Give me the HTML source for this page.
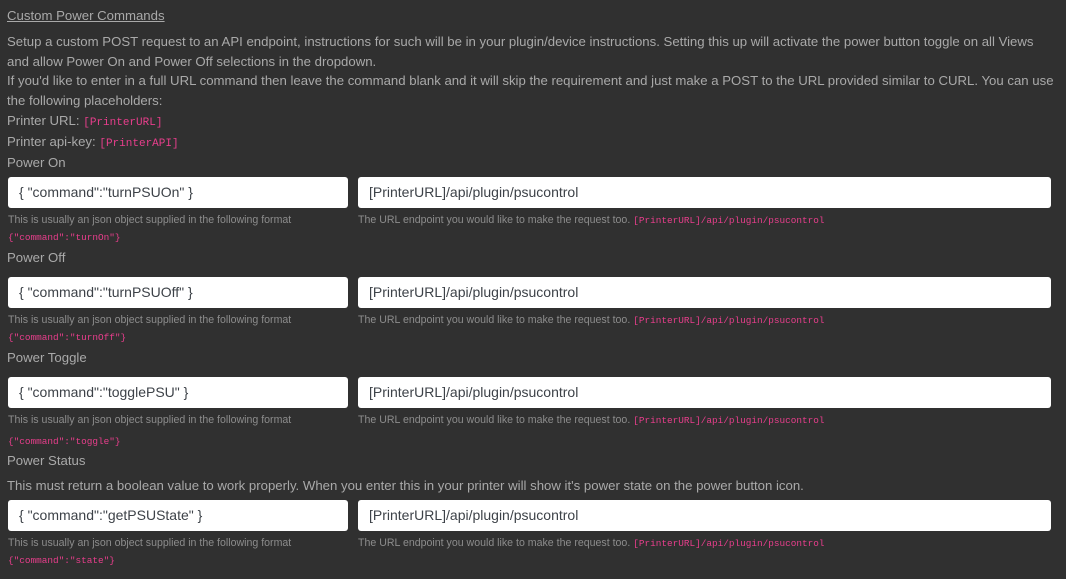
<!DOCTYPE html>
<html><head><style>
body{margin:0;width:1066px;height:579px;background:#303030;font-family:"Liberation Sans",sans-serif;color:#a9a9a9;position:relative;overflow:hidden}
.t{position:absolute;left:7px;white-space:nowrap;font-size:13.2px}
.s{position:absolute;white-space:nowrap;font-size:10.6px;color:#8c8c8c}
code,.c{font-family:"Liberation Mono",monospace;color:#e83e8c;font-size:9.4px}
.tc{font-size:11px}
.in{position:absolute;height:31px;background:#fff;border-radius:3px;color:#3d4248;font-size:14px;line-height:31px;box-sizing:border-box;padding-left:11px;white-space:nowrap}
.l{left:8px;width:340px}.r{left:358px;width:693px}
</style></head><body>
<div class="t" style="top:8px;text-decoration:underline">Custom Power Commands</div>
<div class="t" style="top:34px">Setup a custom POST request to an API endpoint, instructions for such will be in your plugin/device instructions. Setting this up will activate the power button toggle on all Views</div>
<div class="t" style="top:54px">and allow Power On and Power Off selections in the dropdown.</div>
<div class="t" style="top:73px">If you'd like to enter in a full URL command then leave the command blank and it will skip the requirement and just make a POST to the URL provided similar to CURL. You can use</div>
<div class="t" style="top:93px">the following placeholders:</div>
<div class="t" style="top:113px">Printer URL: <code class="tc">[PrinterURL]</code></div>
<div class="t" style="top:134px">Printer api-key: <code class="tc">[PrinterAPI]</code></div>

<div class="t" style="top:155px">Power On</div>
<div class="in l" style="top:177px">{ "command":"turnPSUOn" }</div>
<div class="in r" style="top:177px">[PrinterURL]/api/plugin/psucontrol</div>
<div class="s" style="left:8px;top:214px">This is usually an json object supplied in the following format</div>
<div class="s" style="left:8px;top:231px"><span class="c">{"command":"turnOn"}</span></div>
<div class="s" style="left:358px;top:214px">The URL endpoint you would like to make the request too. <span class="c">[PrinterURL]/api/plugin/psucontrol</span></div>

<div class="t" style="top:250px">Power Off</div>
<div class="in l" style="top:277px">{ "command":"turnPSUOff" }</div>
<div class="in r" style="top:277px">[PrinterURL]/api/plugin/psucontrol</div>
<div class="s" style="left:8px;top:314px">This is usually an json object supplied in the following format</div>
<div class="s" style="left:8px;top:331px"><span class="c">{"command":"turnOff"}</span></div>
<div class="s" style="left:358px;top:314px">The URL endpoint you would like to make the request too. <span class="c">[PrinterURL]/api/plugin/psucontrol</span></div>

<div class="t" style="top:350px">Power Toggle</div>
<div class="in l" style="top:377px">{ "command":"togglePSU" }</div>
<div class="in r" style="top:377px">[PrinterURL]/api/plugin/psucontrol</div>
<div class="s" style="left:8px;top:414px">This is usually an json object supplied in the following format</div>
<div class="s" style="left:8px;top:435px"><span class="c">{"command":"toggle"}</span></div>
<div class="s" style="left:358px;top:414px">The URL endpoint you would like to make the request too. <span class="c">[PrinterURL]/api/plugin/psucontrol</span></div>

<div class="t" style="top:453px">Power Status</div>
<div class="t" style="top:478px">This must return a boolean value to work properly. When you enter this in your printer will show it's power state on the power button icon.</div>
<div class="in l" style="top:500px">{ "command":"getPSUState" }</div>
<div class="in r" style="top:500px">[PrinterURL]/api/plugin/psucontrol</div>
<div class="s" style="left:8px;top:537px">This is usually an json object supplied in the following format</div>
<div class="s" style="left:8px;top:554px"><span class="c">{"command":"state"}</span></div>
<div class="s" style="left:358px;top:537px">The URL endpoint you would like to make the request too. <span class="c">[PrinterURL]/api/plugin/psucontrol</span></div>
</body></html>
